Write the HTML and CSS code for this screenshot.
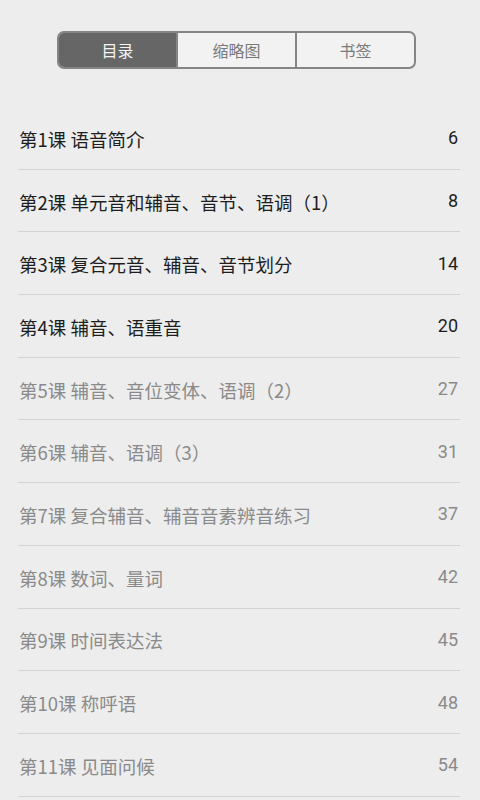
FILE: index.html
```html
<!DOCTYPE html>
<html lang="zh-CN">
<head>
  <meta charset="UTF-8" />
  <title>目录</title>
  <link rel="stylesheet" href="styles.css">
</head>
<body>

<div id="tabBar">
  <div class="tabs">
    <div class="tab active">目录</div>
    <div class="tab">缩略图</div>
    <div class="tab">书签</div>
  </div>
</div>

<ul id="toc">
  <li class="row read"><span class="title">第1课 语音简介</span><span class="page">6</span></li>
  <li class="row read"><span class="title">第2课 单元音和辅音、音节、语调（1）</span><span class="page">8</span></li>
  <li class="row read"><span class="title">第3课 复合元音、辅音、音节划分</span><span class="page">14</span></li>
  <li class="row read"><span class="title">第4课 辅音、语重音</span><span class="page">20</span></li>
  <li class="row"><span class="title">第5课 辅音、音位变体、语调（2）</span><span class="page">27</span></li>
  <li class="row"><span class="title">第6课 辅音、语调（3）</span><span class="page">31</span></li>
  <li class="row"><span class="title">第7课 复合辅音、辅音音素辨音练习</span><span class="page">37</span></li>
  <li class="row"><span class="title">第8课 数词、量词</span><span class="page">42</span></li>
  <li class="row"><span class="title">第9课 时间表达法</span><span class="page">45</span></li>
  <li class="row"><span class="title">第10课 称呼语</span><span class="page">48</span></li>
  <li class="row"><span class="title">第11课 见面问候</span><span class="page">54</span></li>
</ul>

</body>
</html>
```

FILE: styles.css
```css
body {
  background: #ededed;
  margin: 0;
  padding: 0;
  font-family: "Noto Sans CJK SC", "Noto Sans", sans-serif;
  overflow: hidden;
}

#tabBar {
  padding: 31px 0 0 57px;
}

.tabs {
  display: flex;
  width: 359px;
  height: 38px;
  box-sizing: border-box;
  border: 2px solid #858585;
  border-radius: 7px;
  overflow: hidden;
  background: #f2f2f2;
}

.tab {
  flex: 1;
  display: flex;
  align-items: center;
  justify-content: center;
  font-size: 16px;
  color: #7a7a7a;
  border-left: 2px solid #858585;
}

.tab:first-child {
  border-left: none;
}

.tab.active {
  background: #666;
  color: #f4f4f4;
}

#toc {
  list-style: none;
  margin: 38px 20px 0 18px;
  padding: 0;
}

.row {
  display: flex;
  align-items: center;
  justify-content: space-between;
  height: 61.7px;
  border-bottom: 1px solid #d3d3d3;
  padding: 0 2px 0 1px;
  color: #8a8a8a;
  font-size: 18.5px;
}

.row.read {
  color: #1e1e1e;
}

.row .title {
  padding-top: 2px;
}

.row .page {
  font-family: Roboto, "Noto Sans", sans-serif;
  font-size: 18px;
}
```
